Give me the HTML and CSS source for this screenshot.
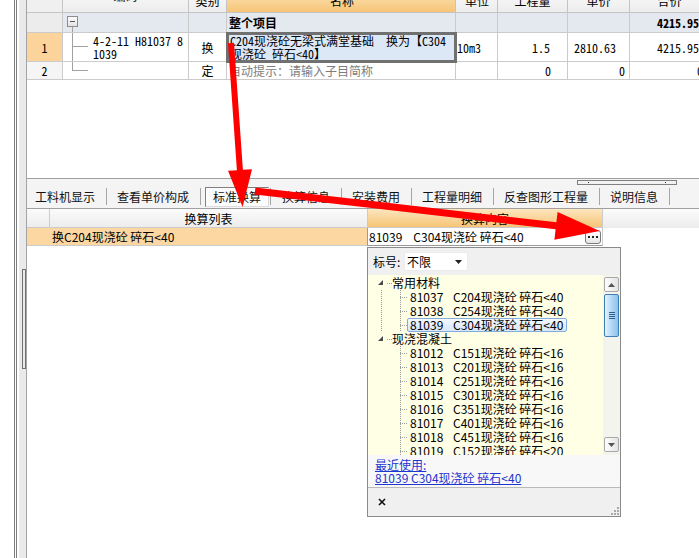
FILE: index.html
```html
<!DOCTYPE html>
<html lang="zh-CN">
<head>
<meta charset="utf-8">
<title>标准换算</title>
<link rel="stylesheet" href="styles.css">
</head>
<body>
<div class="app">
  <div class="side"><div class="splitter"></div></div>
  <div class="main">
    <div class="top-grid">
      <div class="trow thead">
        <div class="c c-num"></div>
        <div class="c c-code">编码</div>
        <div class="c c-type">类别</div>
        <div class="c c-name hl">名称</div>
        <div class="c c-unit">单位</div>
        <div class="c c-qty">工程量</div>
        <div class="c c-price">单价</div>
        <div class="c c-total">合价</div>
      </div>
      <div class="trow r-root">
        <div class="c c-num"></div>
        <div class="c c-code"><span class="root-node"><span class="minus-box"></span><span class="root-line"></span></span></div>
        <div class="c c-type"></div>
        <div class="c c-name bold">整个项目</div>
        <div class="c c-unit"></div>
        <div class="c c-qty"></div>
        <div class="c c-price"></div>
        <div class="c c-total num bold pr10">4215.95</div>
      </div>
      <div class="trow r-1">
        <div class="c c-num cur">1</div>
        <div class="c c-code"><span class="branch"></span><span class="code-text">4-2-11 H81037 8<br>1039</span></div>
        <div class="c c-type center">换</div>
        <div class="c c-name editing"><span>C204现浇砼无梁式满堂基础&nbsp;&nbsp;换为【C304<br>现浇砼 碎石&lt;40】</span></div>
        <div class="c c-unit">10m3</div>
        <div class="c c-qty num pr17">1.5</div>
        <div class="c c-price num pr13">2810.63</div>
        <div class="c c-total num pr10">4215.95</div>
      </div>
      <div class="trow r-2">
        <div class="c c-num">2</div>
        <div class="c c-code"><span class="branch last"></span></div>
        <div class="c c-type center">定</div>
        <div class="c c-name hint">自动提示：请输入子目简称</div>
        <div class="c c-unit"></div>
        <div class="c c-qty num pr16">0</div>
        <div class="c c-price num pr4">0</div>
        <div class="c c-total num pr6">0</div>
      </div>
    </div>

    <div class="tabbar">
      <div class="tab-top"><div class="minibar"><i></i><i></i></div></div>
      <div class="tabs">
        <div class="tab first">工料机显示</div>
        <div class="tab">查看单价构成</div>
        <div class="tab sel"><span class="box">标准换算</span></div>
        <div class="tab">换算信息</div>
        <div class="tab">安装费用</div>
        <div class="tab">工程量明细</div>
        <div class="tab">反查图形工程量</div>
        <div class="tab">说明信息</div>
      </div>
    </div>

    <div class="bgrid">
      <div class="brow bhead">
        <div class="b"></div>
        <div class="b center">换算列表</div>
        <div class="b center hl">换算内容</div>
      </div>
      <div class="brow bdata">
        <div class="b cur"></div>
        <div class="b cur pl2">换C204现浇砼 碎石&lt;40</div>
        <div class="b val"><span class="vcode">81039</span>C304现浇砼 碎石&lt;40<span class="ell"><svg width="10" height="3" viewBox="0 0 10 3"><rect x="0" y="0" width="2" height="2" fill="#222"/><rect x="4" y="0" width="2" height="2" fill="#222"/><rect x="8" y="0" width="2" height="2" fill="#222"/></svg></span></div>
      </div>
    </div>
  </div>
</div>

<div class="popup">
  <div class="pop-head">
    <span class="lbl">标号:</span>
    <span class="combo"><span>不限</span><svg width="7" height="4" viewBox="0 0 7 4"><polygon points="0,0 7,0 3.5,4" fill="#222"/></svg></span>
  </div>
  <div class="pop-body">
    <div class="tree">
      <div class="tn"><span class="exp"><svg width="6" height="6" viewBox="0 0 6 6"><polygon points="5,0 5,5 0,5" fill="#4a4a4a"/></svg></span><span class="hdot"></span>常用材料</div>
      <div class="tn"><span class="rl on"></span><span class="stub"></span><span class="item"><span class="code">81037</span>C204现浇砼 碎石&lt;40</span></div>
      <div class="tn"><span class="rl on"></span><span class="stub"></span><span class="item"><span class="code">81038</span>C254现浇砼 碎石&lt;40</span></div>
      <div class="tn"><span class="rl on"></span><span class="stub half"></span><span class="item picked"><span class="code">81039</span>C304现浇砼 碎石&lt;40</span></div>
      <div class="tn"><span class="exp"><svg width="6" height="6" viewBox="0 0 6 6"><polygon points="5,0 5,5 0,5" fill="#4a4a4a"/></svg></span><span class="hdot"></span>现浇混凝土</div>
      <div class="tn"><span class="rl"></span><span class="stub"></span><span class="item"><span class="code">81012</span>C151现浇砼 碎石&lt;16</span></div>
      <div class="tn"><span class="rl"></span><span class="stub"></span><span class="item"><span class="code">81013</span>C201现浇砼 碎石&lt;16</span></div>
      <div class="tn"><span class="rl"></span><span class="stub"></span><span class="item"><span class="code">81014</span>C251现浇砼 碎石&lt;16</span></div>
      <div class="tn"><span class="rl"></span><span class="stub"></span><span class="item"><span class="code">81015</span>C301现浇砼 碎石&lt;16</span></div>
      <div class="tn"><span class="rl"></span><span class="stub"></span><span class="item"><span class="code">81016</span>C351现浇砼 碎石&lt;16</span></div>
      <div class="tn"><span class="rl"></span><span class="stub"></span><span class="item"><span class="code">81017</span>C401现浇砼 碎石&lt;16</span></div>
      <div class="tn"><span class="rl"></span><span class="stub"></span><span class="item"><span class="code">81018</span>C451现浇砼 碎石&lt;16</span></div>
      <div class="tn"><span class="rl"></span><span class="stub"></span><span class="item"><span class="code">81019</span>C152现浇砼 碎石&lt;20</span></div>
    </div>
    <div class="vscroll">
      <div class="sbtn"><svg width="7" height="4" viewBox="0 0 7 4"><polygon points="0,4 7,4 3.5,0" fill="#555"/></svg></div>
      <div class="thumb"><svg width="6" height="7" viewBox="0 0 6 7"><rect y="0" width="6" height="1" fill="#2d5f8f"/><rect y="2" width="6" height="1" fill="#2d5f8f"/><rect y="4" width="6" height="1" fill="#2d5f8f"/><rect y="6" width="6" height="1" fill="#2d5f8f"/></svg></div>
      <div class="track"></div>
      <div class="sbtn"><svg width="7" height="4" viewBox="0 0 7 4"><polygon points="0,0 7,0 3.5,4" fill="#555"/></svg></div>
    </div>
  </div>
  <div class="recent">
    <a class="lnk">最近使用:</a>
    <a class="lnk">81039 C304现浇砼 碎石&lt;40</a>
  </div>
  <div class="pop-foot">
    <svg class="close" width="8" height="8" viewBox="0 0 8 8"><path d="M1 1 L7 7 M7 1 L1 7" stroke="#111" stroke-width="1.6"/></svg>
    <svg class="grip" width="10" height="10" viewBox="0 0 10 10"><rect x="8" y="2" width="2" height="2" fill="#a8a8a8"/><rect x="5" y="5" width="2" height="2" fill="#a8a8a8"/><rect x="8" y="5" width="2" height="2" fill="#a8a8a8"/><rect x="2" y="8" width="2" height="2" fill="#a8a8a8"/><rect x="5" y="8" width="2" height="2" fill="#a8a8a8"/><rect x="8" y="8" width="2" height="2" fill="#a8a8a8"/></svg>
  </div>
</div>

<svg class="arrows" width="699" height="558" viewBox="0 0 699 558">
  <polygon points="228,43.2 234,42.8 242.9,169.8 252,169.2 242.6,207 228,170.8 236.9,170.2" fill="#ff0000"/>
  <polygon points="255.4,187.5 556.4,222.3 557.6,211.9 599.7,230.9 554.4,239.7 555.6,229.3 254.6,194.5" fill="#ff0000"/>
</svg>
</body>
</html>
```

FILE: styles.css
```css
* { box-sizing: border-box; margin: 0; padding: 0; }
html, body { width: 699px; height: 558px; overflow: hidden; background: #fff; }
body {
  position: relative;
  font-family: "Noto Sans CJK SC", "Noto Sans", sans-serif;
  font-size: 12px;
  color: #000;
}
.app { display: flex; height: 558px; }

/* left decoration */
.side {
  width: 26px; flex: none; padding-top: 269px;
  background: linear-gradient(to right, #fff 0 14px, #7c7c7c 14px 15px, #fff 15px 16px, #7c7c7c 16px 17px, #fff 17px 19px, #eaeaec 19px 26px);
}
.splitter { margin-left: 22px; width: 4px; height: 100px; border: 1px solid #707070; }

.main { flex: 1; min-width: 0; border-left: 1px solid #a3a3a3; display: flex; flex-direction: column; overflow: hidden; }

/* top grid */
.top-grid {
  height: 179px; flex: none; overflow: hidden; border-bottom: 1px solid #a0a0a0;
  font-family: "Noto Sans Mono CJK SC", "Noto Sans CJK SC", monospace;
}
.trow { display: grid; grid-template-columns: 36px 126px 38px 229px 42px 70px 62px 80px; width: 683px; }
.c {
  display: flex; align-items: center; white-space: nowrap; overflow: hidden;
  border-right: 1px solid #cbcbcb; border-bottom: 1px solid #cbcbcb; line-height: 13px;
}
.thead { height: 24px; margin-top: -11px; background: linear-gradient(#fbfbfb, #ececec); }
.thead .c { justify-content: center; border-color: #c4c4c4; }
.hl { background: linear-gradient(#fde6bf, #f6c476); }
.r-root { height: 20px; background: #e4e8ef; }
.r-root .c-num { background: #ececec; }
.r-1 { height: 29px; }
.r-2 { height: 18px; }
.r-2 .c-num { background: #f5f5f5; }
.c-num { justify-content: center; background: #f0f0f0; }
.c-num.cur { background: #fcd49b; }
.c-name { padding-left: 2px; }
.center { justify-content: center; }
.num { justify-content: flex-end; }
.bold { font-weight: bold; }
.pr4 { padding-right: 4px; } .pr6 { padding-right: 6px; } .pr10 { padding-right: 10px; }
.pr13 { padding-right: 13px; } .pr16 { padding-right: 16px; } .pr17 { padding-right: 17px; }
.c-unit { padding-left: 1px; }
.hint { color: #7d7d7d; }
.editing { background: #dde8f6; outline: 3px solid #707070; outline-offset: -2px; padding-left: 3px; position: relative; z-index: 1; }

.c-code { align-items: stretch; }
.root-node { display: flex; flex-direction: column; margin-left: 4px; padding-top: 3px; }
.minus-box {
  width: 11px; height: 11px; border: 1px solid #8c8c8c;
  background: linear-gradient(#555, #555) center / 5px 1px no-repeat, linear-gradient(#fdfdfd, #e2e2e2);
}
.root-line { flex: 1; width: 1px; margin-left: 5px; background: #a0a0a0; }
.branch {
  width: 16px; margin-left: 9px; flex: none;
  background: linear-gradient(#a0a0a0, #a0a0a0) 0 0 / 1px 100% no-repeat, linear-gradient(#a0a0a0, #a0a0a0) 0 13px / 16px 1px no-repeat;
}
.branch.last {
  background: linear-gradient(#a0a0a0, #a0a0a0) 0 0 / 1px 8px no-repeat, linear-gradient(#a0a0a0, #a0a0a0) 0 8px / 16px 1px no-repeat;
}
.code-text { margin-left: 5px; align-self: center; }

/* tabs */
.tabbar { height: 29px; flex: none; background: #f4f4f4; display: flex; flex-direction: column; }
.tab-top { height: 6px; display: flex; }
.minibar {
  margin-left: 550px; margin-top: 1px; width: 100px; height: 5px;
  border: 1px solid #808080; background: #f2f2f2;
  display: flex; justify-content: space-between; padding: 0 10px;
}
.minibar i { width: 1px; height: 1px; background: #333; margin-top: 1px; }
.tabs { height: 23px; display: flex; align-items: center; }
.tab { height: 17px; line-height: 17px; padding: 0 11px 0 10px; border-right: 1px solid #a6a6a6; white-space: nowrap; color: #111; }
.tab.first { padding-left: 8px; }
.tab.sel { height: 20px; padding: 0 1px 0 4px; border-right: none; display: flex; align-items: center; }
.tab.sel::after { content: ""; width: 1px; height: 17px; background: #a6a6a6; margin-left: 1px; }
.tab.sel .box {
  display: block; height: 20px; line-height: 18px; padding: 0 7px;
  border: 1px solid; border-color: #808080 #dcdcdc #dcdcdc #808080; background: #fcfcfc;
}

/* bottom grid */
.bgrid { flex: 1; border-top: 1px solid #a0a0a0; }
.brow { display: grid; grid-template-columns: 23px 318px 235px; }
.b { display: flex; align-items: center; white-space: nowrap; overflow: hidden; border-right: 1px solid #cbcbcb; border-bottom: 1px solid #cbcbcb; }
.bhead { height: 19px; background: linear-gradient(#fbfbfb, #ececec); }
.bhead .b.hl { background: linear-gradient(#fde6bf, #f6c476); }
.bdata { height: 18px; }
.b.cur { background: #fdd7a2; border-right-color: #fdd7a2; }
.pl2 { padding-left: 2px; }
.val { padding-left: 1px; border-left: 1px solid #9a9a9a; margin-left: -1px; border-bottom-color: #9a9a9a; }
.vcode { margin-right: 11px; }
.ell {
  margin-left: auto; margin-right: 1px; width: 16px; height: 14px;
  border: 1px solid #7a7a7a; border-radius: 3px; background: linear-gradient(#ffffff, #e6e6e6);
  display: flex; align-items: center; justify-content: center; padding-top: 2px;
}

/* popup */
.popup {
  position: absolute; left: 367px; top: 247px; width: 254px; height: 270px;
  border: 1px solid #8a8a8a; background: #f0f0f0; display: flex; flex-direction: column; z-index: 2;
}
.pop-head { height: 27px; flex: none; display: flex; align-items: center; padding-left: 5px; }
.lbl { width: 31px; }
.combo {
  width: 64px; height: 19px; background: #fff; border: 1px solid #ececec;
  display: flex; align-items: center; justify-content: space-between; padding: 0 5px 0 2px;
}
.pop-body { height: 180px; flex: none; display: flex; background: #ffffe6; }
.tree { flex: 1; padding: 1px 0 0 7px; overflow: hidden; }
.tn { height: 14px; line-height: 14px; display: flex; align-items: stretch; white-space: nowrap; }
.exp { width: 12px; display: flex; align-items: center; padding-left: 3px; }
.hdot { width: 5px; background: linear-gradient(to right, #9a9a9a 50%, transparent 50%) 0 7px / 2px 1px repeat-x; }
.rl { width: 25px; }
.rl.on { background: linear-gradient(#9a9a9a 50%, transparent 50%) 6px 0 / 1px 2px repeat-y; }
.stub {
  width: 7px;
  background: linear-gradient(#9a9a9a 50%, transparent 50%) 0 0 / 1px 2px repeat-y, linear-gradient(to right, #9a9a9a 50%, transparent 50%) 0 7px / 2px 1px repeat-x;
}
.stub.half {
  background: linear-gradient(#9a9a9a 50%, transparent 50%) 0 0 / 1px 2px repeat-y, linear-gradient(to right, #9a9a9a 50%, transparent 50%) 0 7px / 2px 1px repeat-x;
  background-size: 1px 2px, 2px 1px;
}
.item { border: 1px solid transparent; padding: 0 2px; display: flex; align-items: center; line-height: 12px; }
.item.picked { border-color: #85acdc; border-radius: 2px; background: linear-gradient(#f3f8fe, #d8e7fa); padding-right: 3px; }
.code { width: 43px; }

.vscroll { width: 17px; flex: none; display: flex; flex-direction: column; background: #f4f4ef; padding: 2px 1px 3px 1px; }
.sbtn {
  height: 15px; border: 1px solid #a8a8a8; border-radius: 2px; background: linear-gradient(to right, #fdfdfd, #e4e4e4);
  display: flex; align-items: center; justify-content: center;
}
.thumb {
  height: 43px; margin-top: 2px; border: 1px solid #3f7fb6; border-radius: 2px;
  background: linear-gradient(to right, #e4f2fd, #b3d8f6 50%, #8cc1eb);
  display: flex; align-items: center; justify-content: center;
}
.track { flex: 1; }

.recent { height: 33px; flex: none; background: #f8f8f8; border-bottom: 1px solid #b9b9b9; padding: 3px 0 0 7px; display: flex; flex-direction: column; }
.lnk { color: #1f35cf; text-decoration: underline; line-height: 13px; height: 13px; white-space: nowrap; }
.pop-foot { flex: 1; display: flex; align-items: center; padding-left: 10px; }
.grip { margin-left: auto; align-self: flex-end; margin-bottom: 1px; margin-right: 1px; }

.arrows { position: absolute; left: 0; top: 0; pointer-events: none; z-index: 5; }
```
